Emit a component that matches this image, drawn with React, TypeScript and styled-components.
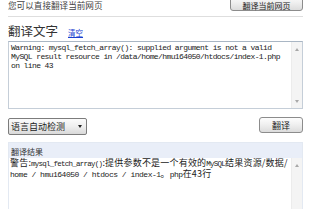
import React from "react";
import styled, { createGlobalStyle } from "styled-components";

const Global = createGlobalStyle`
  html, body { margin: 0; padding: 0; background: #fff; }
  body { width: 312px; height: 209px; overflow: hidden; font-family: "Noto Sans CJK SC", "Liberation Sans", sans-serif; }
`;

const Page = styled.div`
  width: 312px;
  height: 209px;
  box-sizing: border-box;
  padding: 0 9px 0 8px;
  display: flex;
  flex-direction: column;
  overflow: hidden;
`;

const TopBar = styled.div`
  display: flex;
  justify-content: space-between;
  align-items: flex-start;
  height: 16px;
  border-bottom: 1px solid #dedede;
  flex-shrink: 0;
`;

const Hint = styled.span`
  font-size: 8.6px;
  line-height: 11px;
  color: #444;
`;

const Button = styled.button<{ $w: number; $h: number; $fs: number }>`
  width: ${(p) => p.$w}px;
  height: ${(p) => p.$h}px;
  padding: 0;
  box-sizing: border-box;
  border: 1px solid #8c8c8c;
  border-radius: 3px;
  background: linear-gradient(#fdfdfd, #f0f0f0 45%, #dcdcdc);
  font-family: "Noto Sans CJK SC", sans-serif;
  font-size: ${(p) => p.$fs}px;
  line-height: 1;
  color: #222;
  display: flex;
  align-items: center;
  justify-content: center;
`;

const TopButton = styled(Button)`
  margin-top: -5px;
  padding-top: 5px;
`;

const HeadingRow = styled.div`
  display: flex;
  align-items: baseline;
  margin-top: 7px;
  height: 14px;
  flex-shrink: 0;
`;

const Heading = styled.span`
  font-size: 12.5px;
  line-height: 14px;
  color: #333;
`;

const ClearLink = styled.a`
  margin-left: 10px;
  font-size: 7.5px;
  color: #1c3fd0;
  text-decoration: underline;
`;

const Box = styled.div<{ $h: number }>`
  display: flex;
  height: ${(p) => p.$h}px;
  box-sizing: border-box;
  border: 1px solid #c5ced8;
  border-top-color: #a9b6c4;
  background: #fff;
  flex-shrink: 0;
  margin-top: 3px;
`;

const InputArea = styled.textarea`
  flex: 1;
  border: none;
  outline: none;
  resize: none;
  overflow: hidden;
  margin: 0;
  padding: 1px 2px;
  font-family: "Liberation Mono", monospace;
  font-size: 8px;
  letter-spacing: -0.6px;
  line-height: 9px;
  color: #222;
  background: transparent;
  white-space: pre;
`;

const ScrollBar = styled.div`
  width: 11px;
  background: #f4f4f4;
  border-left: 1px solid #ececec;
  display: flex;
  flex-direction: column;
  justify-content: space-between;
  align-items: center;
  padding: 6px 0 5px;
  box-sizing: border-box;
`;

const Arrow = styled.div<{ $up?: boolean }>`
  width: 0;
  height: 0;
  border-left: 2.5px solid transparent;
  border-right: 2.5px solid transparent;
  ${(p) => (p.$up ? "border-bottom: 3px solid #a8a8a8;" : "border-top: 3px solid #a8a8a8;")}
`;

const Controls = styled.div`
  display: flex;
  justify-content: space-between;
  margin-top: 8px;
  height: 18px;
  flex-shrink: 0;
`;

const Select = styled.div`
  align-self: flex-end;
  width: 79px;
  height: 17px;
  box-sizing: border-box;
  border: 1px solid #7c7c7c;
  border-radius: 2px;
  background: linear-gradient(#fbfbfb, #eeeeee 50%, #d9d9d9);
  display: flex;
  align-items: center;
  justify-content: space-between;
  padding: 0 4px 0 2px;
  font-size: 9px;
  color: #222;
`;

const SelectArrow = styled.span`
  width: 0;
  height: 0;
  border-left: 2.5px solid transparent;
  border-right: 2.5px solid transparent;
  border-top: 3px solid #222;
`;

const TranslateButton = styled(Button)`
  align-self: flex-start;
`;

const ResultPanel = styled.div`
  margin-top: 7px;
  display: flex;
  flex-direction: column;
  flex: 1;
  min-height: 0;
  border: 1px solid #e3e9f2;
  border-bottom: none;
`;

const ResultHeader = styled.div`
  height: 15px;
  background: #e9eef8;
  font-size: 8px;
  line-height: 17px;
  color: #333;
  padding-left: 2px;
  flex-shrink: 0;
`;

const ResultBody = styled.div`
  flex: 1;
  display: flex;
  background: #fff;
`;

const ResultText = styled.div`
  flex: 1;
  padding: 0 1px;
  font-size: 9px;
  line-height: 10px;
  color: #222;
  white-space: pre;
  letter-spacing: 0.2px;
`;

const Latin = styled.span<{ $wide?: boolean }>`
  font-family: "Liberation Mono", monospace;
  font-size: ${(p) => (p.$wide ? 8 : 7.5)}px;
  letter-spacing: ${(p) => (p.$wide ? -0.5 : -0.75)}px;
`;

const inputText =
  "Warning: mysql_fetch_array(): supplied argument is not a valid\nMySQL result resource in /data/home/hmu164050/htdocs/index-1.php\non line 43";

export default function App() {
  return (
    <>
      <Global />
      <Page>
        <TopBar>
          <Hint>您可以直接翻译当前网页</Hint>
          <TopButton $w={73} $h={16} $fs={8}>
            翻译当前网页
          </TopButton>
        </TopBar>
        <HeadingRow>
          <Heading>翻译文字</Heading>
          <ClearLink href="#">清空</ClearLink>
        </HeadingRow>
        <Box $h={68}>
          <InputArea readOnly defaultValue={inputText} />
          <ScrollBar>
            <Arrow $up />
            <Arrow />
          </ScrollBar>
        </Box>
        <Controls>
          <Select>
            <span>语言自动检测</span>
            <SelectArrow />
          </Select>
          <TranslateButton $w={44} $h={16} $fs={9}>
            翻译
          </TranslateButton>
        </Controls>
        <ResultPanel>
          <ResultHeader>翻译结果</ResultHeader>
          <ResultBody>
            <ResultText>
              警告:<Latin>mysql_fetch_array()</Latin>:提供参数不是一个有效的<Latin>MySQL</Latin>结果资源/数据/
              {"\n"}
              <Latin $wide>home / hmu164050 / htdocs / index-1</Latin>。<Latin $wide>php</Latin>在43行
            </ResultText>
            <ScrollBar>
              <Arrow $up />
            </ScrollBar>
          </ResultBody>
        </ResultPanel>
      </Page>
    </>
  );
}
